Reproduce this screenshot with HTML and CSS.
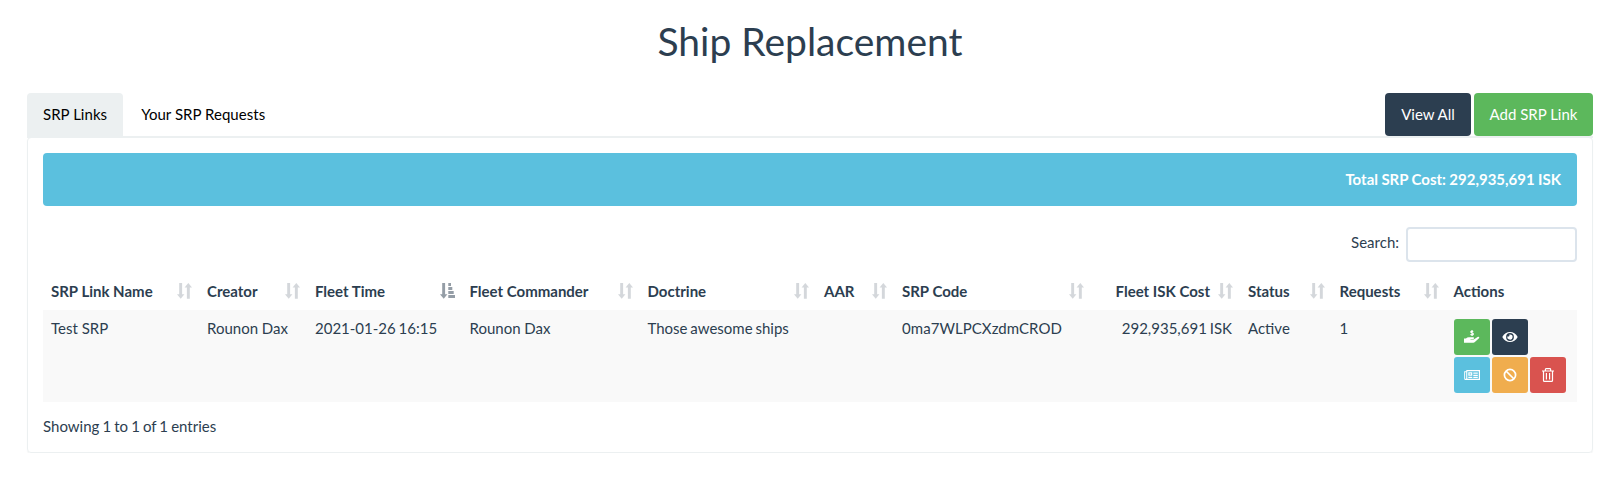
FILE: index.html
```html
<!DOCTYPE html>
<html lang="en">
<head>
<meta charset="utf-8">
<title>Ship Replacement</title>
<link rel="stylesheet" href="styles.css">
</head>
<body>
<svg class="defs" aria-hidden="true">
  <symbol id="sort" viewBox="0 0 15 16">
    <path d="M2.2 0h2.9v11.2h2.3L3.7 15.8 0 11.2h2.2zM9.9 15.8h2.9V4.6H15L11.3 0 7.6 4.6h2.3z"/>
  </symbol>
  <symbol id="sort-active" viewBox="0 0 15 16">
    <path d="M2.2 0h2.9v11.2h2.3L3.7 15.8 0 11.2h2.2zM8.3 0h2.7v3H8.3zM8.3 4h4v2.9h-4zM8.3 8h5.4v2.9H8.3zM8.3 12h6.7v3H8.3z"/>
  </symbol>
</svg>
<main class="container">
  <h1 class="page-header">Ship Replacement</h1>
  <div class="tabs">
    <a class="tab active">SRP Links</a>
    <a class="tab">Your SRP Requests</a>
    <div class="tab-actions">
      <a class="btn btn-primary view-all">View All</a>
      <a class="btn btn-success add-link">Add SRP Link</a>
    </div>
  </div>
  <section class="panel">
    <div class="alert">Total SRP Cost: 292,935,691 ISK</div>
    <div class="filter"><label for="search">Search:</label><input id="search" class="search" type="search"></div>
    <table class="table">
      <colgroup>
        <col class="c-name"><col class="c-creator"><col class="c-time"><col class="c-commander"><col class="c-doctrine"><col class="c-aar"><col class="c-code"><col class="c-cost"><col class="c-status"><col class="c-requests"><col>
      </colgroup>
      <thead>
        <tr>
          <th><div class="head">SRP Link Name<svg class="sort"><use href="#sort"/></svg></div></th>
          <th><div class="head">Creator<svg class="sort"><use href="#sort"/></svg></div></th>
          <th><div class="head">Fleet Time<svg class="sort sorted"><use href="#sort-active"/></svg></div></th>
          <th><div class="head">Fleet Commander<svg class="sort"><use href="#sort"/></svg></div></th>
          <th><div class="head">Doctrine<svg class="sort"><use href="#sort"/></svg></div></th>
          <th><div class="head">AAR<svg class="sort"><use href="#sort"/></svg></div></th>
          <th><div class="head">SRP Code<svg class="sort"><use href="#sort"/></svg></div></th>
          <th><div class="head head-right">Fleet ISK Cost<svg class="sort"><use href="#sort"/></svg></div></th>
          <th><div class="head">Status<svg class="sort"><use href="#sort"/></svg></div></th>
          <th><div class="head">Requests<svg class="sort"><use href="#sort"/></svg></div></th>
          <th><div class="head">Actions</div></th>
        </tr>
      </thead>
      <tbody>
        <tr>
          <td>Test SRP</td>
          <td>Rounon Dax</td>
          <td class="tight">2021-01-26 16:15</td>
          <td>Rounon Dax</td>
          <td class="tight">Those awesome ships</td>
          <td></td>
          <td class="code">0ma7WLPCXzdmCROD</td>
          <td class="right tight">292,935,691 ISK</td>
          <td>Active</td>
          <td>1</td>
          <td>
            <div class="actions">
              <a class="icon-btn btn-success"><svg viewBox="0 0 16 14"><path d="M0 8.4h1.9C3 7.5 4 7.2 5.3 7.3h3.9c1.2.1 1.1 1.6 0 1.7H6.5v.6h3.2l3.9-2.7c1.3-.7 2.2.4 1.4 1.3l-4.4 4.1q-.5.4-1.2.4H0z"/><path class="dollar" d="M9.3 1.4C7.6.8 6.7 1.2 6.7 2s2.7.8 2.7 1.9S7.900 5.300 6.400 4.600M8 0v6"/></svg></a>
              <a class="icon-btn btn-primary"><svg viewBox="0 0 16 14"><path fill-rule="evenodd" d="M.3 7C2.100 3.800 4.800 2 8 2s5.900 1.800 7.700 5c-1.800 3.200-4.500 5-7.700 5S2.100 10.200.3 7zM8 3.100a3.900 3.900 0 1 0 0 7.800 3.900 3.900 0 0 0 0-7.800zM8 4.400a2.600 2.600 0 1 1-2.500 1.900 1.300 1.300 0 0 0 1.800-1.800z"/></svg></a>
              <a class="icon-btn btn-info"><svg viewBox="0 0 16 14"><path fill-rule="evenodd" d="M2.300 2H16v10H1.500Q.2 12 .2 10.500V3.200h2.100zM3.300 3.200v7.600h11.500V3.200zM1.100 4.200v6.400q.6.600 1.100 0V4.200z"/><path fill-rule="evenodd" d="M4.300 4.300h4v3.400h-4zM5.500 5.400v1.200h1.600V5.400zM9.300 4.500h4.500v1.200H9.300zM9.300 6.700h4.500v1.200H9.300zM4.300 8.700h4v1.200h-4zM9.300 8.700h4.500v1.200H9.300z"/></svg></a>
              <a class="icon-btn btn-warning"><svg viewBox="0 0 16 14"><g class="line thick"><circle cx="8" cy="7" r="5.600"/><path d="M4 3l8 8"/></g></svg></a>
              <a class="icon-btn btn-danger"><svg viewBox="0 0 16 14"><g class="line"><path d="M2 3h12M5.400 3V1.400Q5.400.7 6.100.7h3.800q.7 0 .7.7V3M3.500 3v9.400q0 1 1 1h7q1 0 1-1V3M6.400 5v6.500M9.600 5v6.500"/></g></svg></a>
            </div>
          </td>
        </tr>
      </tbody>
    </table>
    <p class="info">Showing 1 to 1 of 1 entries</p>
  </section>
</main>
</body>
</html>
```
FILE: styles.css
```css
* { box-sizing: border-box; }
body {
  margin: 0;
  background: #fff;
  color: #2c3e50;
  font: 15px/20px Lato, sans-serif;
}
.defs { display: none; }
.container { padding: 20px 18px 0 27px; }
.page-header {
  margin: 0 0 30px;
  font-size: 39px;
  font-weight: 400;
  line-height: 43px;
  text-align: center;
}
.tabs {
  display: flex;
  align-items: flex-start;
  height: 45px;
  border-bottom: 2px solid #ecf0f1;
}
.tab {
  height: 44px;
  margin-right: 2px;
  padding: 11px 16px;
  border-radius: 4px 4px 0 0;
  color: #000;
  letter-spacing: .04px;
}
.tab.active { background: #ecf0f1; }
.tab-actions { display: flex; gap: 3px; margin-left: auto; }
.btn {
  height: 43px;
  padding: 11px 0;
  border-radius: 4px;
  color: #fff;
  text-align: center;
  white-space: nowrap;
}
.view-all { width: 86px; }
.add-link { width: 119px; }
.btn-primary { background: #2c3e50; }
.btn-success { background: #5cb85c; }
.btn-info { background: #5bc0de; }
.btn-warning { background: #f0ad4e; }
.btn-danger { background: #d9534f; }
.panel {
  height: 316px;
  margin-top: -1px;
  padding: 15px;
  border: 1px solid #ecf0f1;
  border-radius: 4px;
  box-shadow: 0 1px 1px rgba(0, 0, 0, .05);
}
.alert {
  height: 53px;
  padding: 16px;
  border-radius: 4px;
  background: #5bc0de;
  color: #fff;
  font-weight: 700;
  text-align: right;
  word-spacing: -.25px;
}
.filter {
  display: flex;
  justify-content: flex-end;
  gap: 7px;
  height: 35px;
  margin-top: 21px;
}
.filter label { padding-top: 5px; }
.search {
  width: 171px;
  height: 35px;
  border: 2px solid #dce4ec;
  border-radius: 4px;
  background: #fff;
}
.table {
  width: 1534px;
  margin-top: 11px;
  border-collapse: collapse;
  table-layout: fixed;
}
.c-name { width: 156px; }
.c-creator { width: 108px; }
.c-time { width: 154.5px; }
.c-commander { width: 178px; }
.c-doctrine { width: 176.5px; }
.c-aar { width: 78px; }
.c-code { width: 197px; }
.c-cost { width: 149px; }
.c-status { width: 91.5px; }
.c-requests { width: 114px; }
th { height: 37px; padding: 0 7px 1px 8px; text-align: left; }
.head { display: flex; align-items: center; justify-content: space-between; white-space: nowrap; }
.head-right { justify-content: flex-end; gap: 8px; }
.sort { width: 15px; height: 16px; fill: currentColor; opacity: .2; }
.sorted { opacity: .5; }
tbody tr { height: 92px; background: #f9f9f9; }
td { padding: 8px; vertical-align: top; white-space: nowrap; }
.right { text-align: right; }
.tight { word-spacing: -1px; }
.code { letter-spacing: .05px; }
.actions { display: flex; flex-wrap: wrap; gap: 2px; width: 114px; padding-top: 1px; }
.icon-btn {
  display: grid;
  place-items: center;
  width: 36px;
  height: 36px;
  border-radius: 3px;
}
.actions .btn-primary { margin-right: 36px; }
.icon-btn svg { width: 16px; height: 14px; fill: #fff; }
.icon-btn .dollar { fill: none; stroke: #fff; stroke-width: 1.1; }
.line { fill: none; stroke: #fff; stroke-width: 1.2; }
.thick { stroke-width: 1.7; }
.info { margin: 14px 0 0; word-spacing: -.75px; }
```
